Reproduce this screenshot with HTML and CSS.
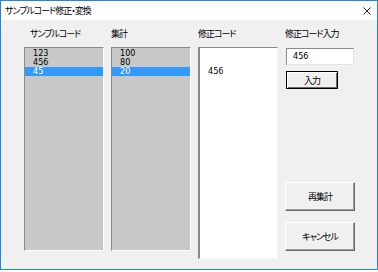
FILE: index.html
```html
<!DOCTYPE html>
<html lang="ja">
  <head>
    <meta charset="UTF-8" />
    <title>サンプルコード修正・変換</title>
    <link rel="stylesheet" href="styles.css">
  </head>
  <body>
    <div class="window">
      <div class="titlebar">
        <span class="title">サンプルコード修正・変換</span>
        <span class="close">
          <svg width="8" height="8" viewBox="0 0 8 8"><path d="M0.5 0.5 L7.5 7.5 M7.5 0.5 L0.5 7.5" stroke="#222" stroke-width="1" fill="none"/></svg>
        </span>
      </div>
      <div class="content">
        <div class="col">
          <div class="label label-first">サンプルコード</div>
          <ul class="list">
            <li>123</li>
            <li>456</li>
            <li class="selected">45</li>
          </ul>
        </div>
        <div class="col">
          <div class="label">集計</div>
          <ul class="list">
            <li>100</li>
            <li>80</li>
            <li class="selected">20</li>
          </ul>
        </div>
        <div class="col">
          <div class="label">修正コード</div>
          <div class="memo">456</div>
        </div>
        <div class="col col-side">
          <div class="label">修正コード入力</div>
          <div class="textbox">456</div>
          <button class="btn btn-default">入力</button>
          <button class="btn btn-big btn-recount">再集計</button>
          <button class="btn btn-big btn-cancel">キャンセル</button>
        </div>
      </div>
    </div>
  </body>
</html>
```

FILE: styles.css
```css
* {
  margin: 0;
  padding: 0;
  box-sizing: border-box;
}
body {
  background: #ffffff;
  font-family: "Noto Sans CJK JP", sans-serif;
  font-size: 9px;
  letter-spacing: -1px;
  color: #000;
  font-feature-settings: "palt";
}
.window {
  width: 378px;
  height: 270px;
  border: 1px solid #2b80d8;
  display: flex;
  flex-direction: column;
}
.titlebar {
  height: 19px;
  background: #ffffff;
  display: flex;
  align-items: center;
  padding-left: 4px;
}
.title {
  line-height: 19px;
}
.close {
  margin-left: auto;
  padding-right: 6px;
  display: flex;
}
.content {
  flex: 1;
  background: #f0f0f0;
  display: flex;
  gap: 7px;
  padding: 7px 0 0 23px;
}
.col {
  width: 80px;
  display: flex;
  flex-direction: column;
}
.col-side {
  width: 70px;
}
.label {
  height: 14px;
  line-height: 14px;
  margin-bottom: 6px;
  white-space: nowrap;
}
.label-first {
  padding-left: 6px;
}
.list {
  list-style: none;
  height: 204px;
  background: #c8c8c8;
  border-style: solid;
  border-width: 1px;
  border-color: #8a8a8a #ffffff #ffffff #8a8a8a;
  font-family: "Liberation Sans Narrow", "DejaVu Sans Condensed", sans-serif;
  font-size: 9px;
  letter-spacing: 0;
}
.list li {
  height: 9px;
  line-height: 9px;
  padding-left: 8px;
}
.list li:first-child {
  margin-top: 1px;
}
.list .selected {
  background: #3399ff;
  color: #ffffff;
}
.memo {
  height: 212px;
  background: #ffffff;
  border-style: solid;
  border-width: 1px 1px 1px 2px;
  border-color: #8a8a8a #f8f8f8 #f8f8f8 #8a8a8a;
  padding: 18px 0 0 8px;
  font-family: "Liberation Sans Narrow", "DejaVu Sans Condensed", sans-serif;
  font-size: 9px;
  letter-spacing: 0;
}
.textbox {
  width: 68px;
  height: 17px;
  margin: 1px 0 0 1px;
  background: #ffffff;
  border-style: solid;
  border-width: 1px;
  border-color: #8a8a8a #e3e3e3 #e3e3e3 #8a8a8a;
  padding: 2px 0 0 6px;
  font-family: "Liberation Sans Narrow", "DejaVu Sans Condensed", sans-serif;
  font-size: 9px;
  letter-spacing: 0;
}
.btn {
  font-family: "Noto Sans CJK JP", sans-serif;
  font-size: 9px;
  letter-spacing: -1px;
  font-feature-settings: "palt";
  color: #000;
  background: #f0f0f0;
  border-style: solid;
  border-width: 1px;
  border-color: #ffffff #696969 #696969 #ffffff;
  box-shadow: inset -1px -1px 0 #a0a0a0;
}
.btn-default {
  width: 52px;
  height: 18px;
  margin: 6px 0 0 1px;
  border-color: #000;
  box-shadow: inset 1px 1px 0 #ffffff, inset -1px -1px 0 #696969;
}
.btn-big {
  width: 70px;
  height: 29px;
}
.btn-recount {
  margin-top: 93px;
}
.btn-cancel {
  margin-top: 11px;
}
```
